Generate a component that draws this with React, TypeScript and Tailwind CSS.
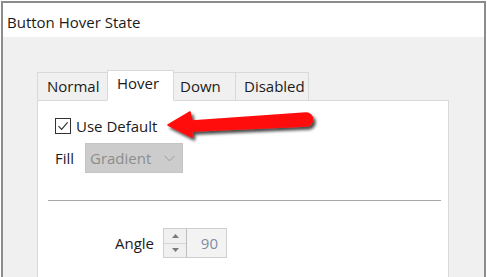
import React from 'react'

const font = { fontFamily: '"Open Sans", "Noto Sans", Arial, sans-serif' }

function Arrow() {
  return (
    <svg
      className="absolute left-[160px] top-[104px]"
      width="160"
      height="44"
      viewBox="0 0 160 44"
    >
      <defs>
        <filter id="shadow" x="-10%" y="-30%" width="130%" height="180%">
          <feDropShadow dx="2.5" dy="3" stdDeviation="1.6" floodColor="#000" floodOpacity="0.7" />
        </filter>
      </defs>
      <path
        d="M8 21 L30 8 L32 17 L146 9 A6.5 6.5 0 0 1 146 22 L32 27 L32 33 Z"
        fill="#ff0a0a"
        stroke="#ff0a0a"
        strokeWidth="1.5"
        strokeLinejoin="round"
        filter="url(#shadow)"
      />
    </svg>
  )
}

export default function App() {
  return (
    <div className="relative w-[487px] h-[277px] overflow-hidden bg-white text-[#1b1b1b]" style={font}>
      <div className="ml-[1px] mt-[1px] w-[485px] border-2 border-[#8c8c8c]">
        {/* title */}
        <div className="h-[34px] bg-white pl-[4px] pt-[10px] text-[15px] leading-[18px]">Button Hover State</div>

        {/* body */}
        <div className="bg-[#f0f0f0] pt-[33px] pl-[34px] pr-[35px]">
          <div className="flex items-end text-[15px] relative z-10 -mb-px">
            <div className="w-[70px] h-[29px] border border-[#d9d9d9] border-r-0 bg-[#f0f0f0] flex items-center pl-[9px]">Normal</div>
            <div className="w-[67px] h-[31px] border border-[#d9d9d9] border-b-white bg-white flex items-start pl-[9px] pt-[1px]">Hover</div>
            <div className="w-[62px] h-[29px] border border-[#d9d9d9] border-l-0 bg-[#f0f0f0] flex items-center pl-[6px]">Down</div>
            <div className="w-[73px] h-[29px] border border-[#d9d9d9] border-l-0 bg-[#f0f0f0] flex items-center pl-[8px]">Disabled</div>
          </div>
          <div className="h-[200px] bg-white border border-[#d9d9d9] pt-[17px] text-[15px]">
            <div className="flex items-center pl-[17px] h-[16px]">
              <div className="w-[16px] h-[16px] border border-[#333] bg-white flex items-center justify-center">
                <svg width="12" height="12" viewBox="0 0 12 12">
                  <path d="M1.5 6.2 L4.6 9.3 L10.6 2.3" fill="none" stroke="#333" strokeWidth="1.2" />
                </svg>
              </div>
              <span className="ml-[5px]">Use Default</span>
            </div>

            <div className="flex items-center pl-[17px] mt-[9px]">
              <span className="w-[30px]">Fill</span>
              <div className="w-[98px] h-[30px] bg-[#cccccc] border border-[#c4c4c4] flex items-center justify-between pl-[4px] pr-[7px] text-[#8d8d8d]">
                <span>Gradient</span>
                <svg width="11" height="7" viewBox="0 0 11 7">
                  <path d="M0.5 0.8 L5.5 5.8 L10.5 0.8" fill="none" stroke="#9b9b9b" strokeWidth="1" />
                </svg>
              </div>
            </div>

            <div className="ml-[10px] mr-[7px] mt-[27px] h-px bg-[#a6a6a6]" />

            <div className="flex items-center pl-[77px] mt-[27px]">
              <span className="w-[48px]">Angle</span>
              <div className="flex h-[30px] border border-[#cfcfcf]">
                <div className="w-[23px] flex flex-col border-r border-[#bdbdbd] bg-[#f0f0f0]">
                  <div className="flex-1 flex items-center justify-center border-b border-[#d6d6d6]">
                    <svg width="7" height="4" viewBox="0 0 7 4"><path d="M0 4 L3.5 0 L7 4 Z" fill="#7a7a7a" /></svg>
                  </div>
                  <div className="flex-1 flex items-center justify-center">
                    <svg width="7" height="4" viewBox="0 0 7 4"><path d="M0 0 L3.5 4 L7 0 Z" fill="#7a7a7a" /></svg>
                  </div>
                </div>
                <div className="w-[39px] bg-[#f3f3f3] flex items-center justify-end pr-[8px] text-[#7f8da3]">90</div>
              </div>
            </div>
          </div>
        </div>
      </div>
      <Arrow />
    </div>
  )
}
